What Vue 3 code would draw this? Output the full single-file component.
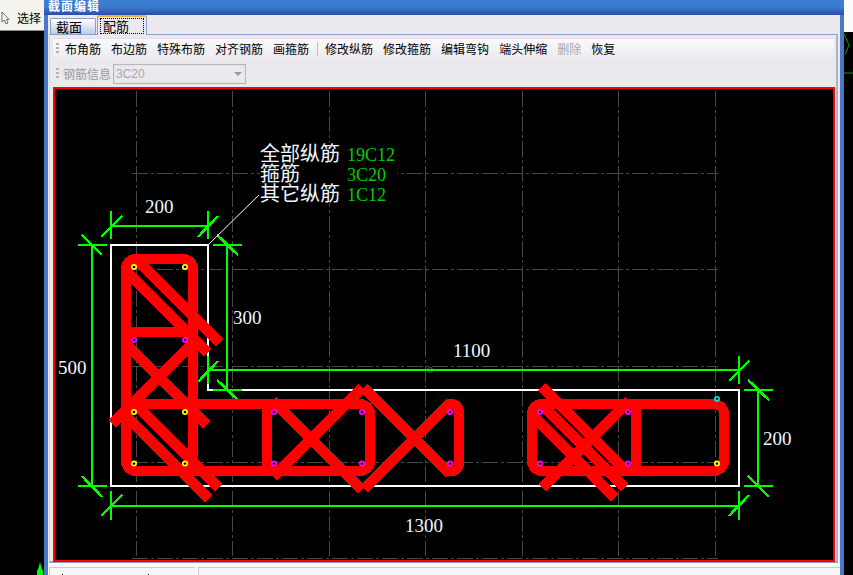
<script setup>
const actions = [
  { label: '布角筋' },
  { label: '布边筋' },
  { label: '特殊布筋' },
  { label: '对齐钢筋' },
  { label: '画箍筋' },
  { sep: true },
  { label: '修改纵筋' },
  { label: '修改箍筋' },
  { label: '编辑弯钩' },
  { label: '端头伸缩' },
  { label: '删除', off: true },
  { label: '恢复' },
]

// grid of the drawing, 96.5 apart
const gridX = [136.5, 232.5, 329, 425.5, 522.5, 618.5, 715]
const gridY = [173, 269.5, 366, 462, 558.5]

// dimension lines: [x1, y1, x2, y2]
const dims = [
  [111, 226, 208, 226], [111, 211, 111, 239], [208, 211, 208, 239],
  [227, 245, 227, 390], [213, 245, 242, 245], [213, 390, 242, 390],
  [92, 245, 92, 486], [78, 245, 107, 245], [78, 486, 107, 486],
  [111, 505.5, 739, 505.5], [111, 491, 111, 520], [739, 491, 739, 520],
  [208, 370, 739, 370], [208, 356, 208, 384], [739, 356, 739, 384],
  [758, 390, 758, 486], [744, 390, 773, 390], [744, 486, 773, 486],
]
const slashes = [
  [101, 237, 122, 216], [198, 237, 218, 216],
  [217, 235, 238, 255], [217, 380, 238, 400],
  [82, 235, 102, 255], [82, 476, 102, 497],
  [101, 516, 122, 495], [729, 516, 749, 495],
  [198, 382, 218, 361], [729, 381, 749, 361],
  [748, 380, 769, 400], [748, 476, 769, 497],
]

// stirrups as rounded rects: [x, y, w, h]
const stirrups = [
  [126, 259, 67, 212],
  [126, 404, 244, 67],
  [532, 404, 192, 67],
]
// straight bars: [x1, y1, x2, y2]
const bars = [
  [126, 332, 193, 332],
  [267, 404, 267, 471],
  [636, 404, 636, 471],
]
const diagonals = [
  [134, 257, 220, 343],
  [126, 271, 208, 353],
  [126, 344, 207, 425],
  [196, 340, 112, 424],
  [135, 404, 219, 488],
  [126, 416, 209, 499],
  [273, 401, 362, 490],
  [273, 477, 362, 388],
  [364, 388, 450, 474],
  [364, 489, 450, 403],
  [542, 488, 629, 401],
  [542, 387, 627, 472],
  [545, 408, 625, 488],
  [532, 415, 615, 498],
]

const pins = [
  [134, 267, '#ffff00'], [185, 267, '#ffff00'],
  [134, 340, '#ff00ff'], [185, 340, '#ff00ff'],
  [134, 412, '#ffff00'], [185, 412, '#ffff00'],
  [134, 463.5, '#ffff00'], [185, 463.5, '#ffff00'],
  [274, 412, '#ff00ff'], [362, 412, '#ff00ff'],
  [274, 463.5, '#ff00ff'], [362, 463.5, '#ff00ff'],
  [450, 412, '#ff00ff'], [450, 463.5, '#ff00ff'],
  [540, 412, '#ff00ff'], [628, 412, '#ff00ff'],
  [540, 463.5, '#ff00ff'], [628, 463.5, '#ff00ff'],
  [717, 399, '#00e0e0'], [717, 463.5, '#ffff00'],
]

const labels = [
  ['200', 145, 213], ['300', 233, 324], ['500', 58, 374],
  ['1100', 453, 357], ['1300', 405, 532], ['200', 763, 445],
]
const legend = [
  ['全部纵筋', '19C12'],
  ['箍筋', '3C20'],
  ['其它纵筋', '1C12'],
]
</script>

<template>
  <div class="page">
    <div class="left">
      <div class="left-bar">
        <svg class="cursor" width="9" height="14" viewBox="0 0 9 14">
          <path d="M1 1 L1 11 L3.5 9 L5 13 L7 12 L5.5 8.5 L8 8.5 Z" fill="#fff" stroke="#667" stroke-width="1" />
        </svg>
        <span>选择</span>
      </div>
      <svg class="axis" width="8" height="13" viewBox="0 0 8 13">
        <path d="M4 0 L5.5 6 L7 9 L7 13 L1 13 L1 9 L2.5 6 Z" fill="#00ff00" />
      </svg>
    </div>

    <div class="window">
      <div class="title">截面编辑</div>
      <div class="body">
        <div class="tabs">
          <div class="tab">截面</div>
          <div class="tab active"><span>配筋</span></div>
        </div>
        <div class="panel">
          <div class="toolbar first">
            <i class="grip"></i>
            <template v-for="(a, i) in actions" :key="i">
              <i v-if="a.sep" class="sep"></i>
              <span v-else class="action" :class="{ off: a.off }">{{ a.label }}</span>
            </template>
          </div>
          <div class="toolbar second">
            <i class="grip"></i>
            <span class="info">钢筋信息</span>
            <div class="combo">
              <span>3C20</span>
              <b class="caret"></b>
            </div>
          </div>
          <div class="canvas">
            <svg width="778" height="471" viewBox="55 89 778 471">
              <g stroke="#484848" stroke-width="1" stroke-dasharray="16 3 3 3" shape-rendering="crispEdges">
                <line v-for="x in gridX" :key="x" :x1="x" y1="91" :x2="x" y2="556" />
                <line v-for="y in gridY" :key="y" x1="132" :y1="y" x2="718" :y2="y" />
              </g>
              <circle cx="430" cy="370" r="2.5" fill="none" stroke="#555" />

              <path d="M111 245 H208 V390 H739 V486 H111 Z" fill="none" stroke="#fff" stroke-width="2" shape-rendering="crispEdges" />

              <g stroke="#00ff00" shape-rendering="crispEdges">
                <line v-for="(d, i) in dims" :key="i" :x1="d[0]" :y1="d[1]" :x2="d[2]" :y2="d[3]" stroke-width="2" />
                <line v-for="(d, i) in slashes" :key="'s' + i" :x1="d[0]" :y1="d[1]" :x2="d[2]" :y2="d[3]" stroke-width="2.6" />
              </g>

              <g fill="none" stroke="#ff0000" stroke-width="10" shape-rendering="crispEdges">
                <rect v-for="(s, i) in stirrups" :key="i" :x="s[0]" :y="s[1]" :width="s[2]" :height="s[3]" rx="10" />
                <line v-for="(b, i) in bars" :key="'b' + i" :x1="b[0]" :y1="b[1]" :x2="b[2]" :y2="b[3]" />
                <line v-for="(b, i) in diagonals" :key="'d' + i" :x1="b[0]" :y1="b[1]" :x2="b[2]" :y2="b[3]" stroke-width="11" />
                <path d="M448 404 H451 Q459 404 459 414 V461 Q459 471 451 471 H448" />
              </g>

              <g fill="none" stroke-width="1.7">
                <circle v-for="(p, i) in pins" :key="i" :cx="p[0]" :cy="p[1]" r="2.2" :stroke="p[2]" />
              </g>

              <line x1="208" y1="245" x2="259" y2="195" stroke="#fff" stroke-width="1" />

              <text v-for="(l, i) in labels" :key="i" class="num" :x="l[1]" :y="l[2]">{{ l[0] }}</text>
            </svg>
            <div class="legend">
              <div v-for="row in legend" :key="row[1]" class="legend-row">
                <span class="name">{{ row[0] }}</span>
                <span class="spec">{{ row[1] }}</span>
              </div>
            </div>
          </div>
        </div>
        <div class="foot">
          <div class="cell one"><i></i><i></i></div>
          <div class="cell"></div>
        </div>
      </div>
    </div>

    <div class="right">
      <div class="right-bar"></div>
      <svg width="9" height="43" viewBox="0 0 9 43">
        <path d="M0 2 L5 13 L1 23" fill="none" stroke="#00a000" />
        <path d="M0 41 H9" stroke="#00a000" />
      </svg>
    </div>
  </div>
</template>

<style scoped>
.page {
  display: flex;
  width: 853px;
  height: 575px;
  overflow: hidden;
  background: #000;
  font-family: "Noto Sans CJK SC", "Liberation Sans", sans-serif;
  font-size: 12px;
  color: #000;
}

.left {
  width: 44px;
  display: flex;
  flex-direction: column;
  align-items: flex-end;
}

.left-bar {
  box-sizing: border-box;
  width: 100%;
  height: 31px;
  display: flex;
  align-items: center;
  gap: 7px;
  padding: 5px 0 0 1px;
  background: #f4f3ee;
  border-bottom: 1px solid #8a8a8a;
  white-space: nowrap;
}

.cursor {
  flex: none;
}

.axis {
  margin-top: auto;
}

.window {
  width: 800px;
  display: flex;
  flex-direction: column;
}

.title {
  height: 15px;
  line-height: 11px;
  padding-left: 4px;
  font-size: 12px;
  letter-spacing: 1px;
  font-weight: 700;
  color: #fff;
  background: linear-gradient(#3b80d4, #3a78ce 50%, #2a4fa8);
  overflow: hidden;
}

.body {
  flex: 1;
  min-height: 0;
  display: flex;
  flex-direction: column;
  background: #ebe9ed;
  border-left: 4px solid #4a78c4;
  border-right: 4px solid #4a78c4;
}

.tabs {
  height: 19px;
  display: flex;
  align-items: flex-end;
  gap: 1px;
  padding-left: 2px;
}

.tab {
  box-sizing: border-box;
  width: 46px;
  height: 16px;
  line-height: 15px;
  padding-left: 5px;
  font-size: 13px;
  background: linear-gradient(#fff, #b8cce8);
  border: 1px solid #8aa0c8;
  border-bottom: none;
  border-radius: 2px 2px 0 0;
}

.tab.active {
  position: relative;
  z-index: 1;
  width: 50px;
  height: 20px;
  margin-bottom: -1px;
  padding: 1px 2px 2px;
  line-height: 14px;
  background: #ebe9ed;
  border-top: 2px solid #f5b040;
}

.tab.active span {
  display: block;
  height: 14px;
  padding-left: 2px;
  border: 1px dotted #000;
}

.panel {
  box-sizing: border-box;
  width: 789px;
  margin-left: 1px;
  height: 529px;
  padding: 3px 2px 1px 3px;
  border-top: 1px solid #8aa0c8;
  border-right: 2px solid #a9b4c8;
  border-bottom: 2px solid #8aa0c8;
  border-left: 1px solid #d4d8e4;
  background: #ebe9ed;
}

.toolbar {
  display: flex;
  align-items: center;
  padding-left: 3px;
}

.toolbar.first {
  height: 22px;
  padding-bottom: 2px;
  background: linear-gradient(#fafafc, #ebe9ee);
  border-top: 1px solid #e2dfea;
  box-sizing: border-box;
}

.toolbar.second {
  height: 23px;
  margin: 2px 0;
}

.grip {
  width: 3px;
  height: 11px;
  margin-right: 6px;
  background: repeating-linear-gradient(#b4b2b8 0 2px, transparent 2px 4px);
}

.second .grip {
  margin-right: 4px;
}

.action {
  margin-right: 10px;
  white-space: nowrap;
}

.action.off {
  color: #a8a6ac;
}

.sep {
  width: 1px;
  height: 14px;
  margin: 0 7px 0 -2px;
  background: #c0bec4;
}

.info {
  color: #9a989e;
  white-space: nowrap;
}

.combo {
  box-sizing: border-box;
  width: 133px;
  height: 20px;
  margin-left: 2px;
  display: flex;
  align-items: center;
  justify-content: space-between;
  padding: 0 3px 0 2px;
  border: 1px solid #b8b7bc;
  box-shadow: inset 0 0 0 1px #e4e3e6;
  color: #a8a6ac;
  font-family: "Liberation Sans", sans-serif;
}

.caret {
  border-left: 4px solid transparent;
  border-right: 4px solid transparent;
  border-top: 4px solid #9a989e;
}

.canvas {
  position: relative;
  box-sizing: border-box;
  width: 782px;
  height: 475px;
  border: 2px solid #ff0000;
  background: #000;
}

.canvas svg {
  display: block;
}

.num {
  font-family: "Liberation Serif", serif;
  font-size: 19px;
  fill: #f2f6ff;
}

/* leader note sits on the drawing, its black box hides the grid */
.legend {
  position: absolute;
  left: 205px;
  top: 54px;
  width: 137px;
  background: #000;
}

.legend-row {
  display: flex;
  align-items: baseline;
  height: 20px;
  line-height: 20px;
  white-space: nowrap;
}

.name {
  flex: none;
  width: 87px;
  font-size: 20px;
  color: #f2f6ff;
}

.spec {
  font-family: "Liberation Serif", serif;
  font-size: 18px;
  color: #00cc00;
}

.foot {
  flex: 1;
  display: flex;
  gap: 3px;
  padding: 4px 0 0 1px;
  background: #fbfbfc;
}

.cell {
  flex: 1;
  display: flex;
  align-items: flex-end;
  background: #f7f7f7;
  border-top: 1px solid #ccc;
  border-left: 1px solid #ccc;
}

.cell.one {
  flex: none;
  width: 146px;
  gap: 85px;
  padding-left: 12px;
  box-sizing: border-box;
}

.cell.one i {
  width: 1px;
  height: 1px;
  background: #000;
}

.right {
  flex: 1;
  display: flex;
  flex-direction: column;
}

.right-bar {
  height: 32px;
  flex: none;
  background: #fbfbfb;
}
</style>

<style>
html, body {
  margin: 0;
  background: #000;
  overflow: hidden;
}
</style>
